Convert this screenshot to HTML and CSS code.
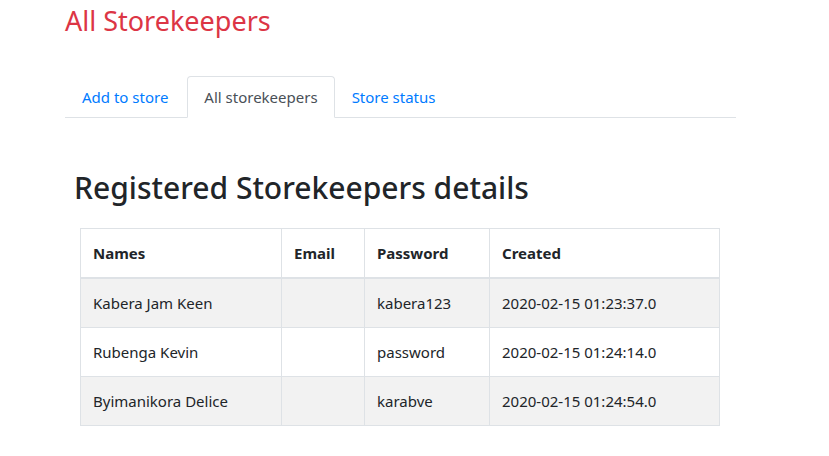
FILE: index.html
```html
<!DOCTYPE html>
<html>
<head>
<meta charset="utf-8">
<link rel="stylesheet" href="styles.css">
</head>
<body>
<div class="page">
  <h3 class="title">All Storekeepers</h3>
  <ul class="tabs">
    <li><a class="tab" href="#">Add to store</a></li>
    <li><a class="tab active" href="#">All storekeepers</a></li>
    <li><a class="tab" href="#">Store status</a></li>
  </ul>
  <section class="panel">
    <h2 class="heading">Registered Storekeepers details</h2>
    <table class="grid">
      <colgroup>
        <col class="c-name"><col class="c-email"><col class="c-pass"><col class="c-created">
      </colgroup>
      <thead>
        <tr><th>Names</th><th>Email</th><th>Password</th><th>Created</th></tr>
      </thead>
      <tbody>
        <tr><td>Kabera Jam Keen</td><td></td><td>kabera123</td><td>2020-02-15 01:23:37.0</td></tr>
        <tr><td>Rubenga Kevin</td><td></td><td>password</td><td>2020-02-15 01:24:14.0</td></tr>
        <tr><td>Byimanikora Delice</td><td></td><td>karabve</td><td>2020-02-15 01:24:54.0</td></tr>
      </tbody>
    </table>
  </section>
</div>
</body>
</html>
```
FILE: styles.css
```css
* { box-sizing: border-box; }
body {
  margin: 0;
  background: #fff;
  color: #212529;
  font-family: "Noto Sans", "Open Sans", sans-serif;
  font-size: 16px;
  line-height: 1.5;
}
.page {
  width: 736px;
  padding-left: 65px;
}
.title {
  margin: 0;
  padding-top: 5px;
  font-size: 27px;
  font-weight: 400;
  line-height: 1.2;
  color: #dc3545;
}
.tabs {
  display: flex;
  list-style: none;
  margin: 39px 0 0;
  padding: 0;
  border-bottom: 1px solid #dee2e6;
}
.tabs li { margin-bottom: -1px; }
.tab {
  display: block;
  padding: 8px 16px;
  border: 1px solid transparent;
  border-top-left-radius: 4px;
  border-top-right-radius: 4px;
  color: #007bff;
  text-decoration: none;
  font-size: 15px;
  line-height: 24px;
}
.tabs li:nth-child(2) { margin-left: 2px; }
.tab.active {
  color: #495057;
  background: #fff;
  border-color: #dee2e6 #dee2e6 #fff;
}
.panel {
  padding: 0 15px;
}
.heading {
  margin: 52px 0 22px -6px;
  font-size: 30px;
  font-weight: 500;
  line-height: 1.2;
}
.grid {
  width: 640px;
  border-collapse: collapse;
  font-size: 15px;
}
.c-name { width: 201px; }
.c-email { width: 83px; }
.c-pass { width: 125px; }
.grid th, .grid td {
  border: 1px solid #dee2e6;
  padding: 12px;
  text-align: left;
  vertical-align: top;
  line-height: 24px;
}
.grid th { font-weight: 700; }
.grid thead th { border-bottom-width: 2px; }
.grid tbody tr:nth-child(odd) { background: #f2f2f2; }
```
